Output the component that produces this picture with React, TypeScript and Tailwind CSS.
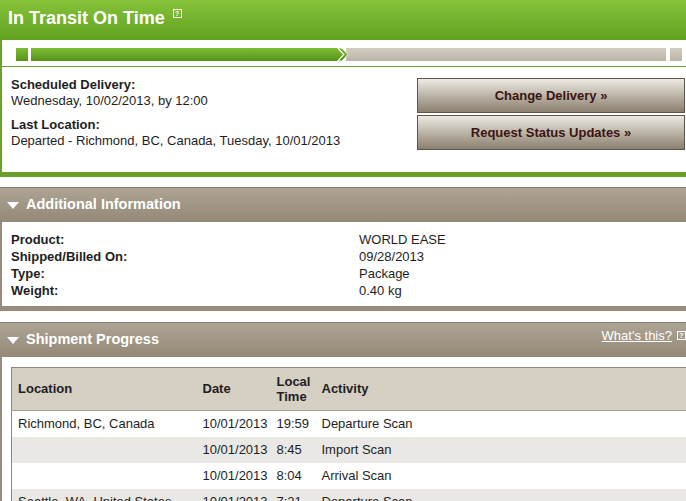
import React from "react";

function HelpIcon({ className = "" }: { className?: string }) {
  return (
    <span
      className={
        "inline-flex h-[9px] w-[9px] items-center justify-center border border-white text-[7px] leading-none font-bold text-white " +
        className
      }
    >
      ?
    </span>
  );
}

function Triangle() {
  return (
    <svg width="12" height="7" viewBox="0 0 12 7" className="mr-[7px]">
      <polygon points="0,0 12,0 6,7" fill="#ffffff" />
    </svg>
  );
}

function Chevron() {
  return (
    <svg width="16" height="13" viewBox="0 0 16 13" className="-ml-[3px] -mr-[2px] shrink-0 relative z-10">
      <defs>
        <linearGradient id="cg" x1="0" y1="0" x2="0" y2="1">
          <stop offset="0" stopColor="#7fbd38" />
          <stop offset="1" stopColor="#559214" />
        </linearGradient>
      </defs>
      <polygon points="0,0 5,0 11,6.5 5,13 0,13" fill="url(#cg)" />
      <polygon points="6,0 10,0 16,6.5 10,13 6,13 12,6.5" fill="url(#cg)" stroke="#ffffff" strokeWidth="1" />
    </svg>
  );
}

const rows = [
  { loc: "Richmond, BC, Canada", date: "10/01/2013", time: "19:59", act: "Departure Scan" },
  { loc: "", date: "10/01/2013", time: "8:45", act: "Import Scan" },
  { loc: "", date: "10/01/2013", time: "8:04", act: "Arrival Scan" },
  { loc: "Seattle, WA, United States", date: "10/01/2013", time: "7:21", act: "Departure Scan" },
];

export default function App() {
  return (
    <div className="h-[501px] w-[686px] overflow-hidden bg-white font-['Liberation_Sans',Arial,sans-serif] text-[13px] text-[#1e1e1e]">
      {/* Green header */}
      <div className="flex h-[40px] items-start bg-gradient-to-b from-[#86c33b] to-[#62a01f] pl-[8px] pt-[7px]">
        <span className="text-[18px] leading-[22px] font-bold text-white">In Transit On Time</span>
        <HelpIcon className="ml-[8px] mt-[2px]" />
      </div>

      <div className="border-l-2 border-[#6aa22a]">
        {/* progress bar */}
        <div className="flex h-[27px] items-start pl-[14px] pt-[8px] border-b border-[#6e9f34]">
          <div className="h-[13px] w-[12px] bg-gradient-to-b from-[#7fbd38] to-[#559214]" />
          <div className="ml-[3px] h-[13px] w-[304px] bg-gradient-to-b from-[#7fbd38] to-[#559214]" />
          <Chevron />
          <div className="h-[13px] w-[320px] bg-gradient-to-b from-[#d2ccc2] to-[#bcb4a7]" />
          <div className="ml-[4px] h-[13px] w-[12px] bg-gradient-to-b from-[#d2ccc2] to-[#bcb4a7]" />
        </div>

        {/* info + buttons */}
        <div className="flex h-[105px] justify-between pl-[9px] pt-[10px]">
          <div className="leading-[16px]">
            <div className="font-bold">Scheduled Delivery:</div>
            <div>Wednesday, 10/02/2013, by 12:00</div>
            <div className="mt-[8px] font-bold">Last Location:</div>
            <div>Departed - Richmond, BC, Canada, Tuesday, 10/01/2013</div>
          </div>
          <div className="mr-[1px] flex w-[268px] flex-col gap-[2px] pt-[1px]">
            <button className="h-[35px] w-full border border-[#5e5546] bg-gradient-to-b from-[#eeebe4] to-[#8b806f] text-[13px] font-bold text-[#3b1410]">
              Change Delivery »
            </button>
            <button className="h-[35px] w-full border border-[#5e5546] bg-gradient-to-b from-[#eeebe4] to-[#8b806f] text-[13px] font-bold text-[#3b1410]">
              Request Status Updates »
            </button>
          </div>
        </div>
      </div>
      <div className="h-[5px] bg-[#6a9e2a]" />

      {/* Additional Information */}
      <div className="mt-[10px]">
        <div className="flex h-[35px] items-center border-t border-[#857b6b] bg-gradient-to-b from-[#aea494] to-[#948977] pl-[7px]">
          <Triangle />
          <span className="text-[14.5px] font-bold text-white">Additional Information</span>
        </div>
        <div className="flex border-l-2 border-[#978c7b] pl-[9px] pt-[9px] pb-[7px] leading-[17px]">
          <div className="w-[348px] font-bold">
            <div>Product:</div>
            <div>Shipped/Billed On:</div>
            <div>Type:</div>
            <div>Weight:</div>
          </div>
          <div>
            <div>WORLD EASE</div>
            <div>09/28/2013</div>
            <div>Package</div>
            <div>0.40 kg</div>
          </div>
        </div>
        <div className="h-[5px] bg-[#978c7b]" />
      </div>

      {/* Shipment Progress */}
      <div className="mt-[11px]">
        <div className="flex h-[35px] items-center border-t border-[#857b6b] bg-gradient-to-b from-[#aea494] to-[#948977] pl-[7px]">
          <Triangle />
          <span className="text-[14.5px] font-bold text-white">Shipment Progress</span>
          <div className="ml-auto -mt-[9px] flex items-center">
            <a className="text-[13px] text-white underline" href="#">
              What's this?
            </a>
            <HelpIcon className="ml-[5px]" />
          </div>
        </div>
        <div className="border-l-2 border-[#978c7b] pl-[9px] pt-[10px]">
          <table className="w-[700px] border-collapse text-left">
            <thead>
              <tr className="h-[43px] border-t border-l border-[#8e8676] bg-[#d5cfc4] border-b border-b-[#a89f8f]">
                <th className="w-[185px] pl-[6px] font-bold">Location</th>
                <th className="w-[74px] pl-[6px] font-bold">Date</th>
                <th className="w-[45px] pl-[6px] font-bold leading-[15px]">
                  Local
                  <br />
                  Time
                </th>
                <th className="pl-[6px] font-bold">Activity</th>
              </tr>
            </thead>
            <tbody>
              {rows.map((r, i) => (
                <tr
                  key={i}
                  className={"h-[26px] border-l border-[#8e8676] " + (i % 2 === 1 ? "bg-[#e9e8e4]" : "bg-white")}
                >
                  <td className="pl-[6px]">{r.loc}</td>
                  <td className="pl-[6px]">{r.date}</td>
                  <td className="pl-[6px]">{r.time}</td>
                  <td className="pl-[6px]">{r.act}</td>
                </tr>
              ))}
            </tbody>
          </table>
        </div>
      </div>
    </div>
  );
}
